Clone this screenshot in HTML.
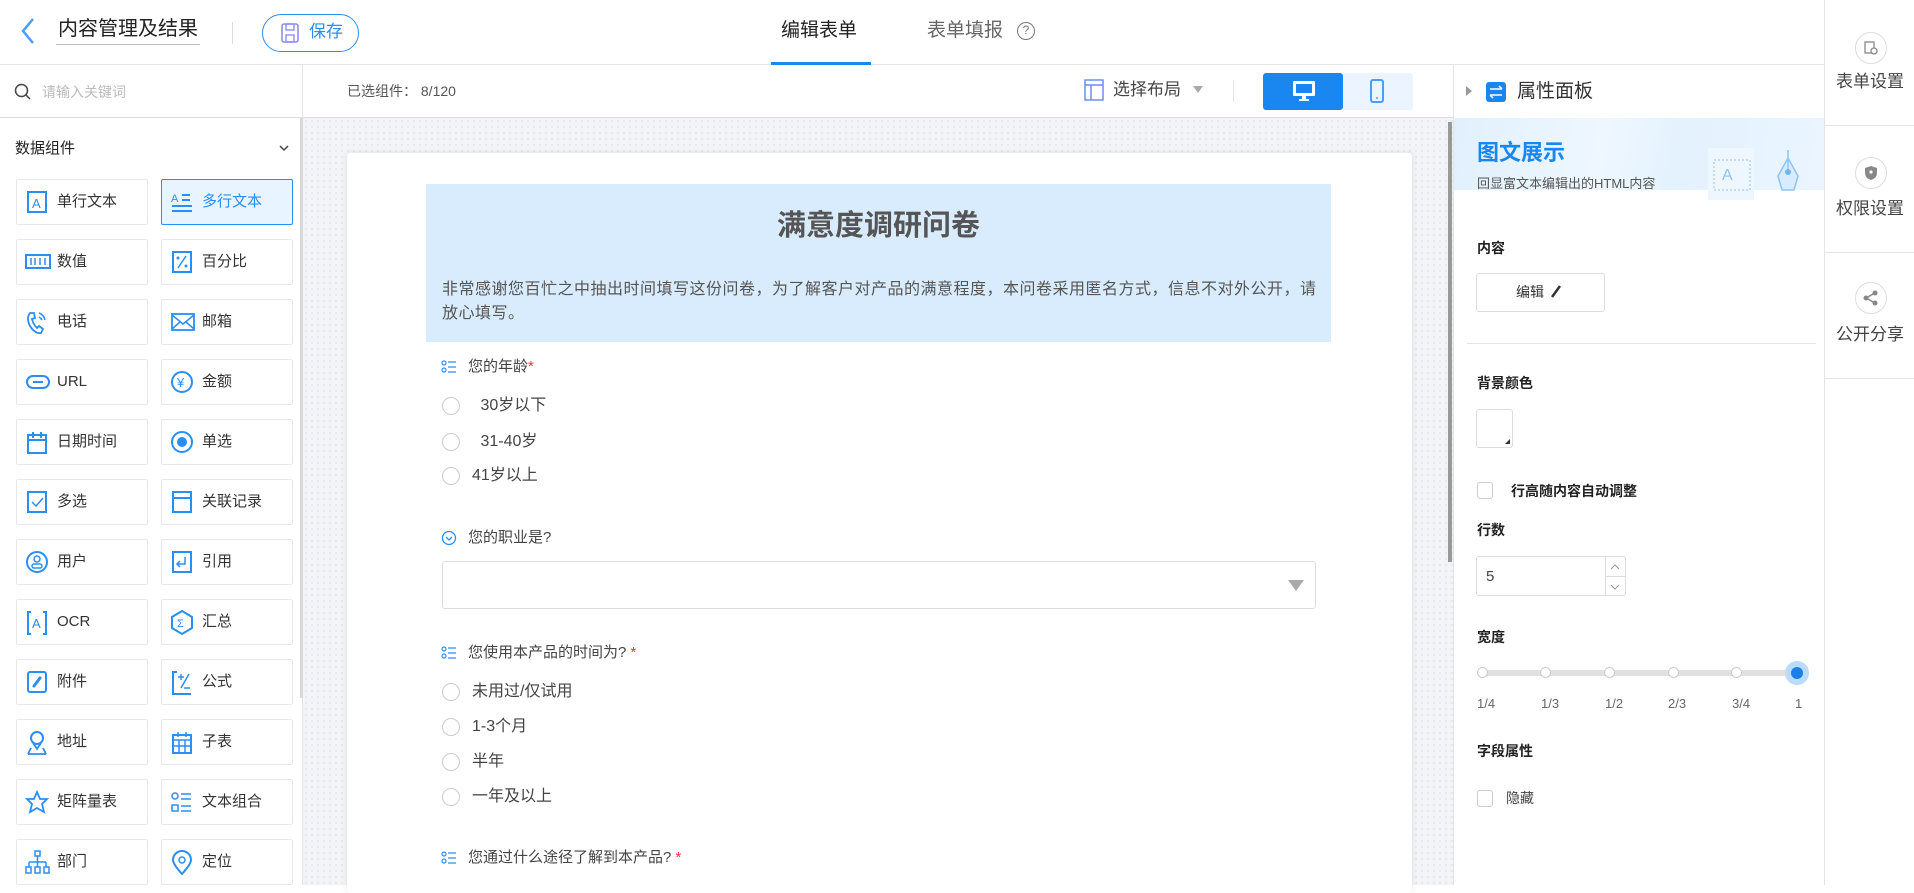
<!DOCTYPE html>
<html><head><meta charset="utf-8"><style>
*{box-sizing:border-box;margin:0;padding:0}
body{width:1914px;height:885px;overflow:hidden;position:relative;background:#fff;font-family:"Liberation Sans","Noto Sans CJK SC",sans-serif;color:#333}
.a{position:absolute}
.t{position:absolute;white-space:nowrap;line-height:1}
.item{position:absolute;width:132px;height:46px;border:1px solid #e8e8e8;border-radius:2px;background:#fff}
.item span{position:absolute;left:40px;top:14px;font-size:15px;color:#333;line-height:1}
.item svg{position:absolute;left:8px;top:10px}
.radio{position:absolute;width:18px;height:18px;border:1px solid #ccc;border-radius:50%}
.lbl{font-size:14px;font-weight:bold;color:#222}
</style></head><body>
<div class="a" style="left:0;top:0;width:1824px;height:65px;border-bottom:1px solid #e4e4e4;background:#fff"></div>
<svg class="a" style="left:20px;top:17px" width="16" height="28"><path d="M13 2 L3 14 L13 26" stroke="#4a9ff5" stroke-width="2.5" fill="none"/></svg>
<div class="t" style="left:58px;top:19px;font-size:20px;color:#222">内容管理及结果</div>
<div class="a" style="left:56px;top:44px;width:144px;height:1px;background:#bbb"></div>
<div class="a" style="left:232px;top:22px;width:1px;height:22px;background:#ddd"></div>
<div class="a" style="left:262px;top:14px;width:97px;height:38px;border:1px solid #2b8ef5;border-radius:19px"></div>
<svg class="a" style="left:280px;top:22px" width="20" height="22"><rect x="2" y="2" width="16" height="18" rx="2" fill="none" stroke="#8e8ef0" stroke-width="1.6"/><rect x="6" y="2" width="8" height="6" fill="none" stroke="#8e8ef0" stroke-width="1.4"/><rect x="6" y="13" width="8" height="7" fill="none" stroke="#8e8ef0" stroke-width="1.4"/></svg>
<div class="t" style="left:309px;top:23px;font-size:17px;color:#2b8ef5">保存</div>
<div class="t" style="left:781px;top:21px;font-size:19px;color:#222">编辑表单</div>
<div class="a" style="left:771px;top:62px;width:100px;height:3px;background:#1a86f0"></div>
<div class="t" style="left:927px;top:21px;font-size:19px;color:#666">表单填报</div>
<div class="a" style="left:1017px;top:22px;width:18px;height:18px;border:1.5px solid #777;border-radius:50%;font-size:12px;color:#777;text-align:center;line-height:15px">?</div>
<div class="a" style="left:1824px;top:0;width:90px;height:885px;border-left:1px solid #e4e4e4;background:#fff"></div>
<div class="a" style="left:1855px;top:32px;width:32px;height:32px;border:1px solid #ddd;border-radius:50%"></div>
<svg class="a" style="left:1862px;top:39px" width="18" height="18"><rect x="3" y="3" width="9" height="11" fill="none" stroke="#888" stroke-width="1.3"/><circle cx="12" cy="12" r="3" fill="#fff" stroke="#888" stroke-width="1.3"/></svg>
<div class="t" style="left:1836px;top:73px;font-size:17px;color:#444">表单设置</div>
<div class="a" style="left:1825px;top:125px;width:89px;height:1px;background:#e4e4e4"></div>
<div class="a" style="left:1855px;top:157px;width:32px;height:32px;border:1px solid #ddd;border-radius:50%"></div>
<svg class="a" style="left:1863px;top:165px" width="16" height="16"><path d="M8 1 L14 3 L14 8 Q14 13 8 15 Q2 13 2 8 L2 3Z" fill="#888"/><circle cx="8" cy="7" r="1.6" fill="#fff"/></svg>
<div class="t" style="left:1836px;top:200px;font-size:17px;color:#444">权限设置</div>
<div class="a" style="left:1825px;top:252px;width:89px;height:1px;background:#e4e4e4"></div>
<div class="a" style="left:1855px;top:282px;width:32px;height:32px;border:1px solid #ddd;border-radius:50%"></div>
<svg class="a" style="left:1862px;top:289px" width="18" height="18"><circle cx="13" cy="4" r="2.5" fill="#888"/><circle cx="4" cy="9" r="2.5" fill="#888"/><circle cx="13" cy="14" r="2.5" fill="#888"/><path d="M13 4 L4 9 L13 14" stroke="#888" stroke-width="1.5" fill="none"/></svg>
<div class="t" style="left:1836px;top:326px;font-size:17px;color:#444">公开分享</div>
<div class="a" style="left:1825px;top:378px;width:89px;height:1px;background:#e4e4e4"></div>
<div class="a" style="left:0;top:65px;width:303px;height:820px;border-right:1px solid #e4e4e4;background:#fff"></div>
<div class="a" style="left:0;top:117px;width:302px;height:1px;background:#ddd"></div>
<svg class="a" style="left:14px;top:83px" width="18" height="18"><circle cx="7.5" cy="7.5" r="6" fill="none" stroke="#444" stroke-width="1.5"/><path d="M12 12 L16 16" stroke="#444" stroke-width="1.5"/></svg>
<div class="t" style="left:42px;top:85px;font-size:14px;color:#bbb">请输入关键词</div>
<div class="a" style="left:300px;top:118px;width:3px;height:580px;background:#d8d8d8"></div>
<div class="t" style="left:15px;top:141px;font-size:15px;color:#222">数据组件</div>
<svg class="a" style="left:278px;top:143px" width="12" height="10"><path d="M2 3 L6 7 L10 3" stroke="#444" stroke-width="1.5" fill="none"/></svg>
<div class="item" style="left:16px;top:179px"><svg width="24" height="24"><rect x="3" y="2" width="18" height="20" fill="none" stroke="#2b8ef5" stroke-width="2"/><text x="7" y="18" font-size="13" fill="#2b8ef5" font-family="Liberation Sans">A</text></svg><span>单行文本</span></div>
<div class="item" style="left:161px;top:179px;border-color:#2b8ef5;background:#e8f4ff"><svg width="24" height="24"><text x="1" y="12" font-size="11" fill="#2b8ef5" font-family="Liberation Sans">A</text><path d="M12 5h8M12 10h8M2 16h20M2 21h20" stroke="#2b8ef5" stroke-width="2"/></svg><span style="color:#2b8ef5">多行文本</span></div>
<div class="item" style="left:16px;top:239px"><svg width="26" height="24"><rect x="1" y="5" width="24" height="13" fill="none" stroke="#2b8ef5" stroke-width="2"/><path d="M6 8v7M10 8v7M15 8v7M20 8v7" stroke="#2b8ef5" stroke-width="1.5"/></svg><span>数值</span></div>
<div class="item" style="left:161px;top:239px"><svg width="24" height="24"><rect x="3" y="2" width="18" height="20" fill="none" stroke="#2b8ef5" stroke-width="2"/><path d="M16 6 L8 18" stroke="#2b8ef5" stroke-width="1.5"/><circle cx="8" cy="8" r="1.5" fill="#2b8ef5"/><circle cx="16" cy="16" r="1.5" fill="#2b8ef5"/></svg><span>百分比</span></div>
<div class="item" style="left:16px;top:299px"><svg width="24" height="26"><path d="M5 3 Q1 8 5 16 Q10 24 16 23 L18 19 L14 16 L12 18 Q8 14 7 9 L10 8 L9 3Z" fill="none" stroke="#2b8ef5" stroke-width="1.8"/><path d="M14 3 Q19 5 20 10 M14 7 Q16 8 17 10" stroke="#2b8ef5" stroke-width="1.5" fill="none"/></svg><span>电话</span></div>
<div class="item" style="left:161px;top:299px"><svg width="26" height="24"><rect x="2" y="4" width="22" height="16" fill="none" stroke="#2b8ef5" stroke-width="1.8"/><path d="M2 5 L13 14 L24 5 M2 19 L10 12 M24 19 L16 12" stroke="#2b8ef5" stroke-width="1.5" fill="none"/></svg><span>邮箱</span></div>
<div class="item" style="left:16px;top:359px"><svg width="26" height="24"><rect x="2" y="6" width="22" height="12" rx="6" fill="none" stroke="#2b8ef5" stroke-width="2"/><path d="M8 12h10" stroke="#2b8ef5" stroke-width="2"/></svg><span>URL</span></div>
<div class="item" style="left:161px;top:359px"><svg width="26" height="26"><circle cx="12" cy="12" r="10" fill="none" stroke="#2b8ef5" stroke-width="2"/><text x="7" y="17" font-size="13" fill="#2b8ef5">¥</text></svg><span>金额</span></div>
<div class="item" style="left:16px;top:419px"><svg width="24" height="26"><rect x="3" y="5" width="18" height="18" fill="none" stroke="#2b8ef5" stroke-width="2"/><path d="M3 10h18M8 2v6M16 2v6" stroke="#2b8ef5" stroke-width="2"/></svg><span>日期时间</span></div>
<div class="item" style="left:161px;top:419px"><svg width="26" height="26"><circle cx="12" cy="12" r="10" fill="none" stroke="#2b8ef5" stroke-width="2"/><circle cx="12" cy="12" r="5" fill="#2b8ef5"/></svg><span>单选</span></div>
<div class="item" style="left:16px;top:479px"><svg width="24" height="24"><rect x="3" y="2" width="18" height="20" fill="none" stroke="#2b8ef5" stroke-width="2"/><path d="M7 12 L11 16 L18 8" stroke="#2b8ef5" stroke-width="1.5" fill="none"/></svg><span>多选</span></div>
<div class="item" style="left:161px;top:479px"><svg width="24" height="24"><rect x="3" y="2" width="18" height="20" fill="none" stroke="#2b8ef5" stroke-width="2"/><path d="M3 8h18" stroke="#2b8ef5" stroke-width="2"/></svg><span>关联记录</span></div>
<div class="item" style="left:16px;top:539px"><svg width="26" height="26"><circle cx="12" cy="12" r="10" fill="none" stroke="#2b8ef5" stroke-width="2"/><circle cx="12" cy="9" r="3" fill="none" stroke="#2b8ef5" stroke-width="1.5"/><rect x="7" y="14" width="10" height="4" rx="2" fill="none" stroke="#2b8ef5" stroke-width="1.5"/></svg><span>用户</span></div>
<div class="item" style="left:161px;top:539px"><svg width="24" height="24"><rect x="3" y="2" width="18" height="20" fill="none" stroke="#2b8ef5" stroke-width="2"/><path d="M15 7v7H8 M10 11 L7 14 L10 17" stroke="#2b8ef5" stroke-width="1.5" fill="none"/></svg><span>引用</span></div>
<div class="item" style="left:16px;top:599px"><svg width="24" height="26"><path d="M6 2H3v22h3M18 2h3v22h-3" stroke="#2b8ef5" stroke-width="2" fill="none"/><text x="7" y="18" font-size="13" fill="#2b8ef5" font-family="Liberation Sans">A</text></svg><span>OCR</span></div>
<div class="item" style="left:161px;top:599px"><svg width="26" height="26"><path d="M12 1 L22 7 L22 18 L12 24 L2 18 L2 7Z" fill="none" stroke="#2b8ef5" stroke-width="2"/><text x="7" y="17" font-size="11" fill="#2b8ef5">Σ</text></svg><span>汇总</span></div>
<div class="item" style="left:16px;top:659px"><svg width="24" height="24"><rect x="3" y="2" width="18" height="20" rx="2" fill="none" stroke="#2b8ef5" stroke-width="2"/><path d="M9 16 L15 8" stroke="#2b8ef5" stroke-width="3" stroke-linecap="round"/></svg><span>附件</span></div>
<div class="item" style="left:161px;top:659px"><svg width="24" height="26"><path d="M7 2H3v22h18" stroke="#2b8ef5" stroke-width="2" fill="none"/><path d="M11 4v6M8 7h6M19 4 L11 18 M14 18h6" stroke="#2b8ef5" stroke-width="1.5"/></svg><span>公式</span></div>
<div class="item" style="left:16px;top:719px"><svg width="24" height="26"><circle cx="12" cy="8" r="6" fill="none" stroke="#2b8ef5" stroke-width="2"/><path d="M8 13 L12 19 L16 13 M3 24 L6 18 M21 24 L18 18 M3 24h18" stroke="#2b8ef5" stroke-width="1.8" fill="none"/></svg><span>地址</span></div>
<div class="item" style="left:161px;top:719px"><svg width="24" height="26"><rect x="3" y="5" width="18" height="18" fill="none" stroke="#2b8ef5" stroke-width="2"/><path d="M3 10h18M3 16h18M9 10v13M15 10v13M8 2v5M16 2v5" stroke="#2b8ef5" stroke-width="1.5"/></svg><span>子表</span></div>
<div class="item" style="left:16px;top:779px"><svg width="26" height="26"><path d="M12 2 L15 9 L22 9 L17 14 L19 22 L12 18 L5 22 L7 14 L2 9 L9 9Z" fill="none" stroke="#2b8ef5" stroke-width="1.8"/></svg><span>矩阵量表</span></div>
<div class="item" style="left:161px;top:779px"><svg width="24" height="26"><circle cx="5" cy="6" r="3" fill="none" stroke="#2b8ef5" stroke-width="1.5"/><rect x="2" y="15" width="6" height="6" fill="none" stroke="#2b8ef5" stroke-width="1.5"/><path d="M11 4h10M11 9h10M11 16h10M11 21h10" stroke="#2b8ef5" stroke-width="1.5"/></svg><span>文本组合</span></div>
<div class="item" style="left:16px;top:839px"><svg width="26" height="26"><rect x="10" y="1" width="5" height="5" fill="none" stroke="#2b8ef5" stroke-width="1.5"/><path d="M12.5 6v6M4 12h17M4 12v5M12.5 12v5M21 12v5" stroke="#2b8ef5" stroke-width="1.5" fill="none"/><rect x="1" y="17" width="5" height="6" fill="none" stroke="#2b8ef5" stroke-width="1.5"/><rect x="10" y="17" width="5" height="6" fill="none" stroke="#2b8ef5" stroke-width="1.5"/><rect x="19" y="17" width="5" height="6" fill="none" stroke="#2b8ef5" stroke-width="1.5"/></svg><span>部门</span></div>
<div class="item" style="left:161px;top:839px"><svg width="24" height="26"><path d="M12 24 Q3 14 3 10 A9 9 0 0 1 21 10 Q21 14 12 24Z" fill="none" stroke="#2b8ef5" stroke-width="2"/><circle cx="12" cy="10" r="3" fill="none" stroke="#2b8ef5" stroke-width="1.5"/></svg><span>定位</span></div>
<div class="a" style="left:303px;top:65px;width:1150px;height:53px;border-bottom:1px solid #ddd;background:#fff"></div>
<div class="t" style="left:347px;top:84px;font-size:14px;color:#555">已选组件：&nbsp;8/120</div>
<svg class="a" style="left:1084px;top:79px" width="20" height="22"><rect x="1" y="1" width="18" height="20" fill="none" stroke="#6b8ef0" stroke-width="1.5"/><path d="M1 6h18M7 6v15" stroke="#6b8ef0" stroke-width="1.5"/></svg>
<div class="t" style="left:1113px;top:81px;font-size:17px;color:#444">选择布局</div>
<svg class="a" style="left:1193px;top:86px" width="10" height="8"><path d="M0 0h10L5 7z" fill="#aaa"/></svg>
<div class="a" style="left:1233px;top:80px;width:1px;height:22px;background:#e4e4e4"></div>
<div class="a" style="left:1263px;top:73px;width:80px;height:37px;background:#1a86f0;border-radius:3px"></div>
<svg class="a" style="left:1292px;top:80px" width="24" height="22"><rect x="1" y="1" width="22" height="15" rx="1" fill="#fff"/><rect x="4" y="4" width="16" height="9" fill="#1a86f0"/><rect x="10" y="16" width="4" height="3" fill="#fff"/><rect x="7" y="19" width="10" height="2" fill="#fff"/></svg>
<div class="a" style="left:1343px;top:73px;width:70px;height:37px;background:#ebf4ff;border-radius:0 3px 3px 0"></div>
<svg class="a" style="left:1370px;top:79px" width="14" height="24"><rect x="1" y="1" width="12" height="22" rx="2" fill="none" stroke="#4a9ff5" stroke-width="2"/><circle cx="7" cy="19" r="1" fill="#4a9ff5"/></svg>
<div class="a" style="left:303px;top:118px;width:1150px;height:767px;background-color:#f3f4f7;background-image:radial-gradient(#e2e4ea 1px,transparent 1px);background-size:6px 6px"></div>
<div class="a" style="left:1448px;top:122px;width:4px;height:440px;background:#999"></div>
<div class="a" style="left:347px;top:153px;width:1065px;height:740px;background:#fff;border-radius:4px;box-shadow:0 0 6px rgba(0,0,0,.1)"></div>
<div class="a" style="left:426px;top:184px;width:905px;height:158px;background:#d9ecfd"></div>
<div class="t" style="left:426px;top:212px;width:905px;text-align:center;font-size:29px;font-weight:bold;color:#555">满意度调研问卷</div>
<div class="a" style="left:442px;top:278px;width:880px;font-size:16px;letter-spacing:0.5px;line-height:24px;color:#555">非常感谢您百忙之中抽出时间填写这份问卷，为了解客户对产品的满意程度，本问卷采用匿名方式，信息不对外公开，请放心填写。</div>
<svg class="a" style="left:441px;top:360px" width="16" height="14"><circle cx="3" cy="3" r="2" fill="none" stroke="#2b8ef5" stroke-width="1.2"/><circle cx="3" cy="10" r="2" fill="none" stroke="#2b8ef5" stroke-width="1.2"/><path d="M7 2h8M7 7h8M7 12h8" stroke="#2b8ef5" stroke-width="1.3"/></svg>
<div class="t" style="left:468px;top:359px;font-size:15px;color:#444">您的年龄<span style="color:#e33">*</span></div>
<div class="radio" style="left:442px;top:397px"></div><div class="t" style="left:476px;top:398px;font-size:16px;color:#444">&nbsp;30岁以下</div>
<div class="radio" style="left:442px;top:433px"></div><div class="t" style="left:476px;top:434px;font-size:16px;color:#444">&nbsp;31-40岁</div>
<div class="radio" style="left:442px;top:467px"></div><div class="t" style="left:472px;top:468px;font-size:16px;color:#444">41岁以上</div>
<svg class="a" style="left:441px;top:530px" width="16" height="16"><circle cx="8" cy="8" r="6.5" fill="none" stroke="#2b8ef5" stroke-width="1.3"/><path d="M5 7 L8 10 L11 7" stroke="#2b8ef5" stroke-width="1.3" fill="none"/></svg>
<div class="t" style="left:468px;top:530px;font-size:15px;color:#444">您的职业是?</div>
<div class="a" style="left:442px;top:561px;width:874px;height:48px;border:1px solid #ddd;border-radius:3px"></div>
<svg class="a" style="left:1288px;top:580px" width="16" height="12"><path d="M0 0h16L8 11z" fill="#aaa"/></svg>
<svg class="a" style="left:441px;top:646px" width="16" height="14"><circle cx="3" cy="3" r="2" fill="none" stroke="#2b8ef5" stroke-width="1.2"/><circle cx="3" cy="10" r="2" fill="none" stroke="#2b8ef5" stroke-width="1.2"/><path d="M7 2h8M7 7h8M7 12h8" stroke="#2b8ef5" stroke-width="1.3"/></svg>
<div class="t" style="left:468px;top:645px;font-size:15px;color:#444">您使用本产品的时间为? <span style="color:#e33">*</span></div>
<div class="radio" style="left:442px;top:683px"></div><div class="t" style="left:472px;top:684px;font-size:16px;color:#444">未用过/仅试用</div>
<div class="radio" style="left:442px;top:718px"></div><div class="t" style="left:472px;top:719px;font-size:16px;color:#444">1-3个月</div>
<div class="radio" style="left:442px;top:753px"></div><div class="t" style="left:472px;top:754px;font-size:16px;color:#444">半年</div>
<div class="radio" style="left:442px;top:788px"></div><div class="t" style="left:472px;top:789px;font-size:16px;color:#444">一年及以上</div>
<svg class="a" style="left:441px;top:851px" width="16" height="14"><circle cx="3" cy="3" r="2" fill="none" stroke="#2b8ef5" stroke-width="1.2"/><circle cx="3" cy="10" r="2" fill="none" stroke="#2b8ef5" stroke-width="1.2"/><path d="M7 2h8M7 7h8M7 12h8" stroke="#2b8ef5" stroke-width="1.3"/></svg>
<div class="t" style="left:468px;top:850px;font-size:15px;color:#444">您通过什么途径了解到本产品? <span style="color:#e33">*</span></div>
<div class="a" style="left:1453px;top:65px;width:371px;height:820px;background:#fff;border-left:1px solid #e4e4e4"></div>
<svg class="a" style="left:1466px;top:86px" width="6" height="10"><path d="M0 0 L6 5 L0 10z" fill="#999"/></svg>
<div class="a" style="left:1486px;top:82px;width:20px;height:20px;background:#1a86f0;border-radius:3px"></div>
<svg class="a" style="left:1486px;top:82px" width="20" height="20"><path d="M4 7h12M13 4l3 3M16 13H4M7 16l-3-3" stroke="#fff" stroke-width="1.6" fill="none"/></svg>
<div class="t" style="left:1517px;top:82px;font-size:19px;color:#333">属性面板</div>
<div class="a" style="left:1454px;top:118px;width:370px;height:72px;background:linear-gradient(100deg,#e1f0fd 0%,#eef7ff 40%,#e4f2fe 60%,#eaf5ff 100%)"></div>
<div class="t" style="left:1477px;top:142px;font-size:22px;font-weight:bold;color:#1a86f0">图文展示</div>
<div class="t" style="left:1477px;top:177px;font-size:13px;color:#555">回显富文本编辑出的HTML内容</div>
<div class="a" style="left:1708px;top:148px;width:46px;height:52px;background:#eef7ff"></div>
<svg class="a" style="left:1710px;top:150px" width="100" height="42"><rect x="4" y="10" width="36" height="30" fill="none" stroke="#8cc4f5" stroke-width="1" stroke-dasharray="2 2"/><text x="12" y="30" font-size="16" fill="#8cc4f5" font-family="Liberation Sans">A</text><path d="M78 0 L78 22 M68 26 L78 8 L88 26 L84 40 L72 40Z" stroke="#8cc4f5" stroke-width="1.5" fill="#d8ecfd"/><circle cx="78" cy="22" r="3" fill="#6fb5f5"/></svg>
<div class="t lbl" style="left:1477px;top:241px">内容</div>
<div class="a" style="left:1476px;top:273px;width:129px;height:39px;border:1px solid #ddd;border-radius:3px"></div>
<div class="t" style="left:1516px;top:285px;font-size:14px;color:#333">编辑</div>
<svg class="a" style="left:1550px;top:284px" width="12" height="14"><path d="M2 13 L10 2" stroke="#333" stroke-width="2.5"/></svg>
<div class="a" style="left:1467px;top:343px;width:349px;height:1px;background:#e4e4e4"></div>
<div class="t lbl" style="left:1477px;top:376px">背景颜色</div>
<div class="a" style="left:1476px;top:409px;width:37px;height:39px;border:1px solid #ddd;border-radius:3px"></div>
<svg class="a" style="left:1505px;top:439px" width="5" height="5"><path d="M5 0 L5 5 L0 5z" fill="#333"/></svg>
<div class="a" style="left:1477px;top:482px;width:16px;height:17px;border:1px solid #ccc;border-radius:3px"></div>
<div class="t lbl" style="left:1511px;top:484px">行高随内容自动调整</div>
<div class="t lbl" style="left:1477px;top:523px">行数</div>
<div class="a" style="left:1476px;top:556px;width:150px;height:40px;border:1px solid #ddd;border-radius:3px"></div>
<div class="a" style="left:1605px;top:557px;width:1px;height:38px;background:#ddd"></div>
<div class="a" style="left:1606px;top:576px;width:19px;height:1px;background:#ddd"></div>
<svg class="a" style="left:1609px;top:561px" width="12" height="32"><path d="M2 8 L6 4 L10 8 M2 24 L6 28 L10 24" stroke="#999" stroke-width="1" fill="none"/></svg>
<div class="t" style="left:1486px;top:569px;font-size:15px;color:#444">5</div>
<div class="t lbl" style="left:1477px;top:630px">宽度</div>
<div class="a" style="left:1482px;top:670px;width:315px;height:6px;background:#e0e0e0;border-radius:3px"></div>
<div class="a" style="left:1477px;top:667px;width:11px;height:11px;border:1px solid #ccc;border-radius:50%;background:#fff"></div>
<div class="a" style="left:1540px;top:667px;width:11px;height:11px;border:1px solid #ccc;border-radius:50%;background:#fff"></div>
<div class="a" style="left:1604px;top:667px;width:11px;height:11px;border:1px solid #ccc;border-radius:50%;background:#fff"></div>
<div class="a" style="left:1668px;top:667px;width:11px;height:11px;border:1px solid #ccc;border-radius:50%;background:#fff"></div>
<div class="a" style="left:1731px;top:667px;width:11px;height:11px;border:1px solid #ccc;border-radius:50%;background:#fff"></div>
<div class="a" style="left:1785px;top:661px;width:24px;height:24px;border-radius:50%;background:#bcdbfa"></div>
<div class="a" style="left:1791px;top:667px;width:12px;height:12px;border-radius:50%;background:#1a7fe8"></div>
<div class="t" style="left:1477px;top:697px;font-size:13px;color:#666">1/4</div>
<div class="t" style="left:1541px;top:697px;font-size:13px;color:#666">1/3</div>
<div class="t" style="left:1605px;top:697px;font-size:13px;color:#666">1/2</div>
<div class="t" style="left:1668px;top:697px;font-size:13px;color:#666">2/3</div>
<div class="t" style="left:1732px;top:697px;font-size:13px;color:#666">3/4</div>
<div class="t" style="left:1795px;top:697px;font-size:13px;color:#666">1</div>
<div class="t lbl" style="left:1477px;top:744px">字段属性</div>
<div class="a" style="left:1477px;top:790px;width:16px;height:17px;border:1px solid #ccc;border-radius:3px"></div>
<div class="t" style="left:1506px;top:791px;font-size:14px;color:#444">隐藏</div>
</body></html>
